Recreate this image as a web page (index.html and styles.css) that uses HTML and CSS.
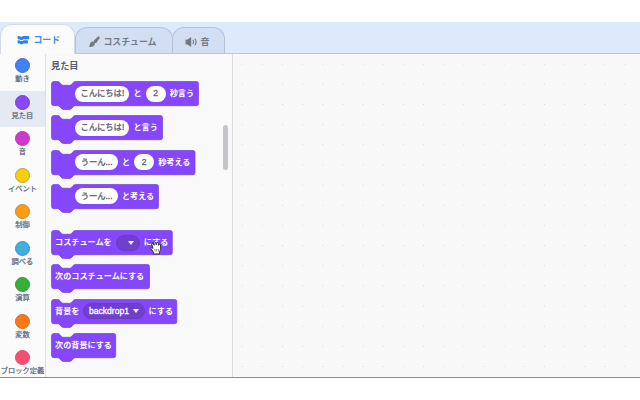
FILE: index.html
```
<!DOCTYPE html>
<html lang="ja">
<head>
<meta charset="utf-8">
<title>Scratch</title>
<link rel="stylesheet" href="styles.css">
</head>
<body>
<div class="app">
  <nav class="tabs">
    <div class="tab active">
      <svg class="icon-code" width="13" height="11" viewBox="0 0 13 11"><path fill="#2f80f0" d="M1.400 1h1.100l1 .7h1.600L6.200 1h5.200q.8 0 .8.8v1.700q0 .8-.8.8H6.400l-1.100.7H3.400l-1-.7h-1Q.6 4.300.6 3.500V1.800Q.6 1 1.400 1zM1.400 5.200h1l1 .7h2l1.100-.7h3.700q.8 0 .8.8v1.700q0 .8-.8.8H6.400l-1.100.8H3.400l-1-.8h-1q-.8 0-.8-.8V6q0-.8.8-.8z"/></svg>
      <span>コード</span>
    </div>
    <div class="tab costume">
      <svg width="12" height="12" viewBox="0 0 12 12"><g fill="#747a83"><path d="M11.200.4c.8.5.5 1.500 0 2.400L8.300 6.900 6 7 5.600 4.800 9.600 1.100c.5-.5 1.100-1 1.600-.7z"/><path d="M4.900 5.500c1.200.2 2 1.100 2 2.200C6.500 10.400 3.400 11.500.4 10.600c1.700-.8 1.200-1.700 1.700-3.200.4-1.300 1.500-2.100 2.800-1.900z"/></g></svg>
      <span>コスチューム</span>
    </div>
    <div class="tab sound">
      <svg width="12" height="10" viewBox="0 0 12 10"><path fill="#747a83" d="M.5 3.200q0-.6.7-.6h1.300L5.300.4q.9-.5.900.5v8.200q0 1-.9.500L2.500 7.400H1.200q-.7 0-.7-.6z"/><path fill="none" stroke="#747a83" stroke-width="1.100" stroke-linecap="round" d="M8 3.300q1.200 1.700 0 3.400M10 2q2.200 3 0 6"/></svg>
      <span>音</span>
    </div>
  </nav>
  <main class="editor">
    <aside class="categories">
      <div class="category"><i class="dot motion"></i><span>動き</span></div>
      <div class="category selected"><i class="dot looks"></i><span>見た目</span></div>
      <div class="category"><i class="dot audio"></i><span>音</span></div>
      <div class="category"><i class="dot events"></i><span>イベント</span></div>
      <div class="category"><i class="dot control"></i><span>制御</span></div>
      <div class="category"><i class="dot sensing"></i><span>調べる</span></div>
      <div class="category"><i class="dot operators"></i><span>演算</span></div>
      <div class="category"><i class="dot variables"></i><span>変数</span></div>
      <div class="category"><i class="dot custom"></i><span>ブロック定義</span></div>
    </aside>
    <section class="palette">
      <h2>見た目</h2>
      <div class="block w1"><svg class="shape" width="150" height="30"><path d="M.5 3Q.5.5 3 .5H6.500Q8 .5 9 1.700L10.500 3.500Q11.200 4.300 12.500 4.300H18.500Q19.800 4.300 20.500 3.500L22 1.700Q23 .5 24.500.5H145.500Q147.500 .5 147.500 2.500V22.700Q147.500 24.700 145.500 24.700H24.500Q23 24.700 22 25.900L20.500 27.700Q19.800 28.500 18.500 28.500H12.500Q11.200 28.500 10.500 27.700L9 25.900Q8 24.700 6.500 24.700H3Q.5 24.700.5 22.200Z"/></svg><span class="input hello">こんにちは!</span><span>と</span><span class="input num">2</span><span>秒言う</span></div>
      <div class="block w2"><svg class="shape" width="150" height="30"><path d="M.5 3Q.5.5 3 .5H6.500Q8 .5 9 1.700L10.500 3.500Q11.200 4.300 12.500 4.300H18.500Q19.800 4.300 20.500 3.500L22 1.700Q23 .5 24.500.5H109.500Q111.500 .5 111.500 2.500V22.700Q111.500 24.700 109.500 24.700H24.500Q23 24.700 22 25.900L20.500 27.700Q19.800 28.500 18.500 28.500H12.500Q11.200 28.500 10.500 27.700L9 25.900Q8 24.700 6.500 24.700H3Q.5 24.700.5 22.200Z"/></svg><span class="input hello">こんにちは!</span><span>と言う</span></div>
      <div class="block w3"><svg class="shape" width="150" height="30"><path d="M.5 3Q.5.5 3 .5H6.500Q8 .5 9 1.700L10.500 3.500Q11.200 4.300 12.500 4.300H18.500Q19.800 4.300 20.500 3.500L22 1.700Q23 .5 24.500.5H142Q144 .5 144 2.500V22.700Q144 24.700 142 24.700H24.500Q23 24.700 22 25.900L20.500 27.700Q19.800 28.500 18.500 28.500H12.500Q11.200 28.500 10.500 27.700L9 25.900Q8 24.700 6.500 24.700H3Q.5 24.700.5 22.200Z"/></svg><span class="input hmm">うーん...</span><span>と</span><span class="input num">2</span><span>秒考える</span></div>
      <div class="block w4"><svg class="shape" width="150" height="30"><path d="M.5 3Q.5.5 3 .5H6.500Q8 .5 9 1.700L10.500 3.500Q11.200 4.300 12.500 4.300H18.500Q19.800 4.300 20.500 3.500L22 1.700Q23 .5 24.500.5H105.500Q107.500 .5 107.500 2.500V22.700Q107.500 24.700 105.500 24.700H24.500Q23 24.700 22 25.900L20.500 27.700Q19.800 28.500 18.500 28.500H12.500Q11.200 28.500 10.500 27.700L9 25.900Q8 24.700 6.500 24.700H3Q.5 24.700.5 22.200Z"/></svg><span class="input hmm">うーん...</span><span>と考える</span></div>
      <div class="block group"><svg class="shape" width="150" height="30"><path d="M.5 3Q.5.5 3 .5H6.500Q8 .5 9 1.700L10.500 3.500Q11.200 4.300 12.500 4.300H18.500Q19.800 4.300 20.500 3.500L22 1.700Q23 .5 24.500.5H119.300Q121.300 .5 121.300 2.500V22.700Q121.300 24.700 119.300 24.700H24.500Q23 24.700 22 25.900L20.500 27.700Q19.800 28.500 18.500 28.500H12.500Q11.200 28.500 10.500 27.700L9 25.900Q8 24.700 6.500 24.700H3Q.5 24.700.5 22.200Z"/></svg><span>コスチュームを</span><span class="menu empty"><i class="caret"></i></span><span>にする</span></div>
      <div class="block"><svg class="shape" width="150" height="30"><path d="M.5 3Q.5.5 3 .5H6.500Q8 .5 9 1.700L10.500 3.500Q11.200 4.300 12.500 4.300H18.500Q19.800 4.300 20.500 3.500L22 1.700Q23 .5 24.500.5H96.500Q98.500 .5 98.500 2.500V22.700Q98.500 24.700 96.500 24.700H24.500Q23 24.700 22 25.900L20.500 27.700Q19.800 28.500 18.500 28.500H12.500Q11.200 28.500 10.500 27.700L9 25.900Q8 24.700 6.500 24.700H3Q.5 24.700.5 22.200Z"/></svg><span>次のコスチュームにする</span></div>
      <div class="block backdrop-row"><svg class="shape" width="150" height="30"><path d="M.5 3Q.5.5 3 .5H6.500Q8 .5 9 1.700L10.500 3.500Q11.200 4.300 12.500 4.300H18.500Q19.800 4.300 20.500 3.500L22 1.700Q23 .5 24.500.5H123.800Q125.800 .5 125.800 2.500V22.700Q125.800 24.700 123.800 24.700H24.500Q23 24.700 22 25.900L20.500 27.700Q19.800 28.500 18.500 28.500H12.500Q11.200 28.500 10.500 27.700L9 25.900Q8 24.700 6.500 24.700H3Q.5 24.700.5 22.200Z"/></svg><span>背景を</span><span class="menu backdrop">backdrop1<i class="caret"></i></span><span>にする</span></div>
      <div class="block"><svg class="shape" width="150" height="30"><path d="M.5 3Q.5.5 3 .5H6.500Q8 .5 9 1.700L10.500 3.500Q11.200 4.300 12.500 4.300H18.500Q19.800 4.300 20.500 3.500L22 1.700Q23 .5 24.500.5H62.700Q64.700 .5 64.700 2.500V22.700Q64.700 24.700 62.700 24.700H24.500Q23 24.700 22 25.900L20.500 27.700Q19.800 28.500 18.500 28.500H12.500Q11.200 28.500 10.500 27.700L9 25.900Q8 24.700 6.500 24.700H3Q.5 24.700.5 22.200Z"/></svg><span>次の背景にする</span></div>
      <div class="scrollbar"></div>
    </section>
    <section class="workspace">
      <svg width="100%" height="100%"><defs><pattern id="grid" x="8.700" y="9.700" width="20.150" height="20.150" patternUnits="userSpaceOnUse"><rect width="1" height="1" fill="#d8d8d8"/></pattern></defs><rect width="100%" height="100%" fill="url(#grid)"/></svg>
    </section>
  </main>
  <svg class="cursor" width="12" height="14" viewBox="0 0 12 14"><path fill="#fff" stroke="#222" stroke-width=".9" stroke-linejoin="round" d="M3.400 12.900V11L1 7.700Q.5 6.500 1.700 6.500L3 7.500 1.800 3.500Q1.700 2.200 2.900 2.300L4.200 4.300 3.900 1.600Q4.400.4 5.500 1.200L6.300 3.800 6.700 1.700Q7.700 1 8.300 2.200L8.400 4.300 9.200 3.100Q10.400 2.800 10.500 4L10.700 8.400 9.500 11V12.900Z"/><path fill="none" stroke="#444" stroke-width=".6" d="M5 8v2.500M6.700 8v2.500M8.400 8v2.500"/></svg>
</div>
</body>
</html>
```
FILE: styles.css
```
* { box-sizing: border-box; }
body {
  margin: 0;
  background: #fff;
  color: #575e75;
  font-family: "Liberation Sans", "Noto Sans CJK JP", sans-serif;
}
.app {
  position: relative;
  height: 400px;
  padding-top: 22px;
  overflow: hidden;
}
.tabs {
  display: flex;
  align-items: flex-end;
  height: 32px;
  background: #dceafc;
  border-bottom: 1px solid #bccade;
}
.tab {
  display: flex;
  align-items: center;
  gap: 3.500px;
  height: 26px;
  padding: 2px 0 0 13px;
  border: 1px solid #b5c3d8;
  border-bottom: 0;
  border-radius: 12px 12px 0 0;
  background: #d2dff3;
  color: #747b8b;
  font-size: 8.900px;
  font-weight: 700;
  line-height: 12px;
  white-space: nowrap;
}
.tab.active {
  position: relative;
  width: 75px;
  height: 30px;
  margin-bottom: -1px;
  padding: 1px 0 0 16px;
  background: #fbfbfb;
  border-color: #d0dcea;
  color: #3c8af2;
}
.costume { width: 98px; padding-left: 12px; }
.sound { width: 53px; margin-left: -1px; padding-left: 12px; }
.editor {
  display: flex;
  height: 324px;
  border-bottom: 1px solid #8e8e90;
}
.categories {
  width: 46px;
  border-right: 1px solid #dedede;
  background: #fbfbfb;
  overflow: hidden;
}
.category {
  display: flex;
  flex-direction: column;
  align-items: center;
  height: 36.550px;
  padding-top: 4px;
  font-size: 7.250px;
  line-height: 11.500px;
  white-space: nowrap;
  -webkit-text-stroke: .2px;
}
.category.selected { background: #e5eaf2; }
.dot {
  flex: none;
  width: 15px;
  height: 15px;
  border: 1px solid;
  border-radius: 50%;
}
.motion { background: #3f82fb; border-color: #3973d8; }
.looks { background: #8549fb; border-color: #7543d5; }
.audio { background: #cd38cd; border-color: #b43eb4; }
.events { background: #fbcd0b; border-color: #c6a22d; }
.control { background: #fb9c17; border-color: #c9862f; }
.sensing { background: #42ade1; border-color: #4a8fb4; }
.operators { background: #35b136; border-color: #38913d; }
.variables { background: #fb7918; border-color: #d36b24; }
.custom { background: #fb4d70; border-color: #dc5070; }
.palette {
  position: relative;
  width: 187px;
  padding: 5px 0 0 5px;
  border-right: 1px solid #dedede;
  background: #f9f9f9;
}
h2 {
  height: 22.100px;
  margin: 0;
  font-size: 9.200px;
  line-height: 14px;
}
.block {
  position: relative;
  display: flex;
  align-items: center;
  gap: 4.100px;
  height: 25px;
  margin-bottom: 9.250px;
  padding-left: 4px;
  color: #fff;
  font-size: 8.150px;
  font-weight: 700;
  line-height: 17px;
  white-space: nowrap;
}
.block span { position: relative; }
.w1, .w2, .w3, .w4 { padding-left: 24.300px; }
.backdrop-row { gap: 3.600px; }
.group { margin-top: 21.300px; }
.shape { position: absolute; left: 0; top: 0; }
.shape path { fill: #8547fb; stroke: #7440d8; stroke-width: .7; }
.input, .menu {
  display: flex;
  align-items: center;
  justify-content: center;
  height: 16px;
  border-radius: 8px;
}
.input {
  background: #fff;
  color: #575e75;
  font-weight: 400;
  -webkit-text-stroke: .3px;
}
.hello { width: 54px; font-size: 8.300px; }
.hmm { width: 42.500px; font-size: 8.300px; }
.num { width: 20px; font-size: 8.600px; }
.menu { background: #7040cc; border: 1px solid #693cc0; }
.empty { width: 24px; padding-left: 6px; }
.backdrop {
  width: 62px;
  gap: 4px;
  font-size: 8.600px;
  font-weight: 400;
  -webkit-text-stroke: .3px;
}
.caret {
  border: 3px solid transparent;
  border-top: 4px solid #fff;
  border-bottom: 0;
}
.scrollbar {
  position: absolute;
  left: 177px;
  top: 71px;
  width: 5px;
  height: 45px;
  border-radius: 3px;
  background: #c7c5ca;
}
.workspace { flex: 1; background: #f8f8f8; }
.workspace svg { display: block; }
.cursor { position: absolute; left: 150px; top: 241px; }
```
